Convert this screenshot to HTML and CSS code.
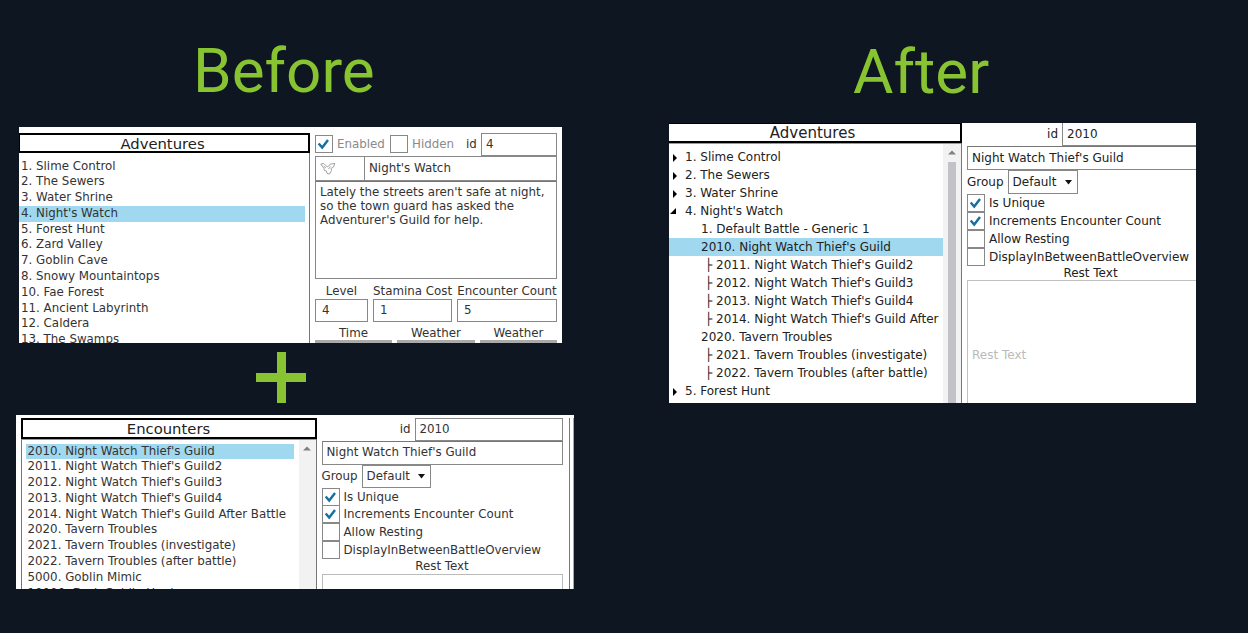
FILE: index.html
```
<!DOCTYPE html>
<html lang="en">
<head>
<meta charset="utf-8">
<title>Before and After</title>
<link rel="stylesheet" href="styles.css">
</head>
<body>
<main class="board">
<section class="before">
<h1>Before</h1>
<div class="panel adventures">
  <div class="side">
    <h2>Adventures</h2>
    <ul class="rows">
      <li>1. Slime Control</li><li>2. The Sewers</li><li>3. Water Shrine</li><li class="on">4. Night's Watch</li><li>5. Forest Hunt</li><li>6. Zard Valley</li><li>7. Goblin Cave</li><li>8. Snowy Mountaintops</li><li>10. Fae Forest</li><li>11. Ancient Labyrinth</li><li>12. Caldera</li><li>13. The Swamps</li>
    </ul>
  </div>
  <div class="detail">
    <div class="flags">
      <span class="box"><svg viewBox="0 0 18 18"><path d="M3 8.500l4 4.500 6.500-8.500"/></svg></span><span class="muted enabled">Enabled</span>
      <span class="box"></span><span class="muted hidden-label">Hidden</span>
      <span class="idl">id</span><span class="field idf">4</span>
    </div>
    <div class="name-row">
      <span class="icon-cell"><svg width="16" height="13" viewBox="0 0 16 13"><path d="M.8 2l3-.5 2.500 2.500 1 1 1.500-1 1.500-2 4.500-.5-1.300 3.500-2.500 1.500.5 2-2 3.500-2.500-.5-.5-2.500-2-.5-.5-2zM3.500 4l2.500 2M10.500 4.500L8.500 7" fill="none" stroke="#8c8c8c" stroke-width=".8"/></svg></span>
      <span class="field grow">Night's Watch</span>
    </div>
    <div class="story">Lately the streets aren't safe at night,<br>so the town guard has asked the<br>Adventurer's Guild for help.</div>
    <div class="stats">
      <span>Level</span><span>Stamina Cost</span><span>Encounter Count</span>
      <span class="field">4</span><span class="field">1</span><span class="field">5</span>
    </div>
    <div class="times"><span>Time</span><span>Weather</span><span>Weather</span><i></i><i></i><i></i></div>
  </div>
</div>
<div class="plus"></div>
<div class="panel encounters">
  <div class="side">
    <h2>Encounters</h2>
    <div class="scroll">
      <ul class="rows">
        <li class="on">2010. Night Watch Thief's Guild</li><li>2011. Night Watch Thief's Guild2</li><li>2012. Night Watch Thief's Guild3</li><li>2013. Night Watch Thief's Guild4</li><li>2014. Night Watch Thief's Guild After Battle</li><li>2020. Tavern Troubles</li><li>2021. Tavern Troubles (investigate)</li><li>2022. Tavern Troubles (after battle)</li><li>5000. Goblin Mimic</li><li>10000. Dark Goblin Hunter</li>
      </ul>
      <div class="bar"><svg width="8" height="5" viewBox="0 0 8 5"><path d="M0 4.500L4 .5l4 4z"/></svg></div>
    </div>
  </div>
  <div class="detail">
    <div class="id-row"><span>id</span><span class="field">2010</span></div>
    <div class="field title">Night Watch Thief's Guild</div>
    <div class="group"><span>Group</span><span class="select">Default<svg width="7" height="5" viewBox="0 0 7 5"><path d="M0 0h7L3.500 4.500z"/></svg></span></div>
    <div class="check"><span class="box"><svg viewBox="0 0 18 18"><path d="M3 8.500l4 4.500 6.500-8.500"/></svg></span>Is Unique</div>
    <div class="check"><span class="box"><svg viewBox="0 0 18 18"><path d="M3 8.500l4 4.500 6.500-8.500"/></svg></span>Increments Encounter Count</div>
    <div class="check"><span class="box"></span>Allow Resting</div>
    <div class="check"><span class="box"></span>DisplayInBetweenBattleOverview</div>
    <div class="rest-label">Rest Text</div>
    <div class="rest"></div>
  </div>
  <div class="edge"></div>
</div>
</section>
<section class="after">
<h1>After</h1>
<div class="panel merged">
  <div class="side">
    <h2>Adventures</h2>
    <div class="scroll">
      <ul class="rows tree">
        <li><svg class="tw" viewBox="0 0 6 8"><path d="M1 0l4 4-4 4z"/></svg>1. Slime Control</li>
        <li><svg class="tw" viewBox="0 0 6 8"><path d="M1 0l4 4-4 4z"/></svg>2. The Sewers</li>
        <li><svg class="tw" viewBox="0 0 6 8"><path d="M1 0l4 4-4 4z"/></svg>3. Water Shrine</li>
        <li><svg class="tw open" viewBox="0 0 6 6"><path d="M6 0v6H0z"/></svg>4. Night's Watch</li>
        <li class="l1">1. Default Battle - Generic 1</li>
        <li class="l1 on">2010. Night Watch Thief's Guild</li>
        <li class="l2">├ 2011. Night Watch Thief's Guild2</li>
        <li class="l2">├ 2012. Night Watch Thief's Guild3</li>
        <li class="l2">├ 2013. Night Watch Thief's Guild4</li>
        <li class="l2">├ 2014. Night Watch Thief's Guild After</li>
        <li class="l1">2020. Tavern Troubles</li>
        <li class="l2">├ 2021. Tavern Troubles (investigate)</li>
        <li class="l2">├ 2022. Tavern Troubles (after battle)</li>
        <li><svg class="tw" viewBox="0 0 6 8"><path d="M1 0l4 4-4 4z"/></svg>5. Forest Hunt</li>
      </ul>
      <div class="bar"><svg width="8" height="5" viewBox="0 0 8 5"><path d="M0 4.500L4 .5l4 4z"/></svg><div class="thumb"></div></div>
    </div>
  </div>
  <div class="detail">
    <div class="id-row"><span>id</span><span class="field">2010</span></div>
    <div class="field title">Night Watch Thief's Guild</div>
    <div class="group"><span>Group</span><span class="select">Default<svg width="7" height="5" viewBox="0 0 7 5"><path d="M0 0h7L3.500 4.500z"/></svg></span></div>
    <div class="check"><span class="box"><svg viewBox="0 0 18 18"><path d="M3 8.500l4 4.500 6.500-8.500"/></svg></span>Is Unique</div>
    <div class="check"><span class="box"><svg viewBox="0 0 18 18"><path d="M3 8.500l4 4.500 6.500-8.500"/></svg></span>Increments Encounter Count</div>
    <div class="check"><span class="box"></span>Allow Resting</div>
    <div class="check"><span class="box"></span>DisplayInBetweenBattleOverview</div>
    <div class="rest-label">Rest Text</div>
    <div class="rest">Rest Text</div>
  </div>
</div>
</section>
</main>
</body>
</html>
```
FILE: styles.css
```
* { box-sizing: border-box; }
body { margin: 0; background: #0e1621; overflow: hidden; }
.board { display: flex; height: 633px; }
.before { width: 640px; }
.after { width: 608px; }
h1 {
  margin: 0; font: 400 62px/72px Roboto, sans-serif; color: #88c431;
}
.before h1 { padding: 35px 0 0 193px; height: 127px; }
.after h1 { padding: 36px 0 0 213px; height: 123px; }

.panel {
  display: flex; background: #fff; overflow: hidden; white-space: nowrap;
  font: 11.850px/16px "DejaVu Sans", sans-serif; color: #333;
}
.side { flex: none; display: flex; flex-direction: column; border-right: 1px solid #777; }
h2 {
  margin: 0; flex: none; border: 2px solid #000; text-align: center;
  font-size: 14.800px; font-weight: 400; line-height: 18px; height: 20px; color: #222;
}
.rows { list-style: none; margin: 0; padding: 0; }
.rows li { height: var(--row); line-height: var(--row); }
.on { background: #a0d8ef; }
.scroll { display: flex; flex: 1; min-height: 0; border-top: 1px solid #999; }
.scroll .rows { flex: 1; min-width: 0; }
.bar { background: #f2f2f2; display: flex; flex-direction: column; align-items: center; }
.bar svg { fill: #808080; display: block; flex: none; }
.thumb { width: 8px; flex: 1; background: #c2c2c8; }

.detail { flex: 1; min-width: 0; }
.field { display: flex; align-items: center; border: 1px solid #888; padding-left: 5px; }
.box { flex: none; width: 18px; height: 18px; border: 1px solid #888; }
.box svg { display: block; width: 100%; height: 100%; fill: none; stroke: #16709f; stroke-width: 2.7; }
.muted { color: #8a8a8a; }

.adventures { --row: 15.8px; width: 543px; height: 216px; margin-left: 19px; padding-top: 6px; }
.adventures .side { width: 291px; }
.adventures h2 { border-left-width: 1px; width: 291px; padding-right: 3px; }
.adventures .rows { padding-top: 5.500px; width: 286px; }
.adventures .rows li { padding-left: 2px; }
.adventures .detail { padding: 0 5px 0 5px; }
.flags { display: flex; align-items: center; height: 23px; }
.flags .muted, .idl { margin-top: -2px; }
.flags .box { margin-top: -1px; }
.enabled { width: 56px; padding-left: 4px; margin-right: 1px; }
.hidden-label { width: 58px; padding-left: 4px; }
.idl { width: 15px; }
.flags .field { flex: 1; height: 23px; padding: 0 0 1px 4px; }
.name-row { display: flex; height: 25px; }
.icon-cell { width: 50px; border: 1px solid #888; padding: 5px 0 0 4px; }
.grow { flex: 1; margin-left: -1px; padding: 0 0 2px 4px; }
.story { height: 98px; border: 1px solid #888; border-top: 1px solid #777; padding: 3px 4px; line-height: 14px; }
.stats { display: grid; grid-template-columns: 53px 79px 100px; column-gap: 5px; grid-template-rows: 20px 23px; text-align: center; line-height: 24px; }
.stats .field { padding: 0 0 1px 6px; }
.times { display: grid; grid-template-columns: 77px 78px 77px; column-gap: 5px; text-align: center; line-height: 18px; }
.times span { height: 18px; padding-top: 2px; }
.times i { height: 3px; background: #aaa; }

.plus {
  width: 50px; height: 51px; margin: 8.500px 0 12px 256px;
  background: linear-gradient(#88c431, #88c431) center / 9px 51px no-repeat,
              linear-gradient(#88c431, #88c431) center / 50px 9px no-repeat;
}

.encounters { --row: 15.8px; width: 558px; height: 174px; margin-left: 15.500px; padding: 3px 0 0 5px; }
.encounters .side { width: 296px; }
.encounters h2 { width: 296px; height: 21px; line-height: 18px; }
.encounters .scroll { border-left: 1px solid #777; }
.encounters .rows { padding: 4px 5px 0 4px; }
.encounters .rows li { padding-left: 2px; }
.encounters .bar { width: 17px; padding-top: 6px; }
.encounters .detail { padding: 0 6px 0 5px; --check: 17.700px; --field: 23.600px; }
.encounters .check { padding-bottom: 1px; }
.encounters .select { width: 69px; }
.edge { width: 5px; border-left: 1px solid #777; border-right: 1px solid #aaa; }

.id-row { display: flex; height: var(--field); align-items: center; justify-content: flex-end; gap: 4px; }
.id-row span { padding-bottom: 1px; }
.id-row .field { height: 100%; padding-left: 4px; width: 148px; }
.title { height: var(--field); padding: 0 0 1px 4px; border-top-color: #777; }
.group { display: flex; align-items: center; height: var(--field); gap: 4px; }
.select { height: 100%; width: 70px; border: 1px solid #888; padding: 0 5px 0 4px; display: flex; align-items: center; justify-content: space-between; }
.select svg { fill: #111; }
.check { display: flex; align-items: center; height: var(--check); gap: 4px; }
.rest-label { text-align: center; height: 15px; line-height: 15px; }
.rest { border: 1px solid #bbb; height: 160px; }

.merged { --row: 18px; width: 527px; height: 280px; margin-left: 29px; color: #222; font-size: 12px; }
.merged .side { width: 293px; }
.merged h2 { border-left: 0; border-top-width: 1px; width: 293px; padding-right: 4px; line-height: 19px; font-size: 15px; }
.merged .rows { padding-top: 4px; }
.merged li { display: flex; align-items: center; }
.merged .l1 { padding-left: 32px; }
.merged .l2 { padding-left: 36px; }
.tw { width: 6px; height: 8px; margin: 2px 7px 0 3px; fill: #000; }
.tw.open { height: 6px; width: 6px; margin: 0 9px 0 1px; }
.merged .bar { width: 18px; padding-top: 6px; }
.merged .thumb { margin-top: 7px; }
.merged .detail { --check: 18px; --field: 24px; padding-left: 5px; }
.merged .id-row { height: 23px; }
.merged .id-row .field { width: 134px; }
.merged .id-row .field, .merged .title, .merged .rest { border-right: 0; }
.merged .id-row .field { border-top: 0; }
.merged .title { padding-bottom: 0; }
.merged .rest-label { width: 247px; height: 14px; }
.merged .rest { display: flex; align-items: center; padding: 0 0 10px 4px; color: #bbb; border-color: #c0c0c0; }
```
